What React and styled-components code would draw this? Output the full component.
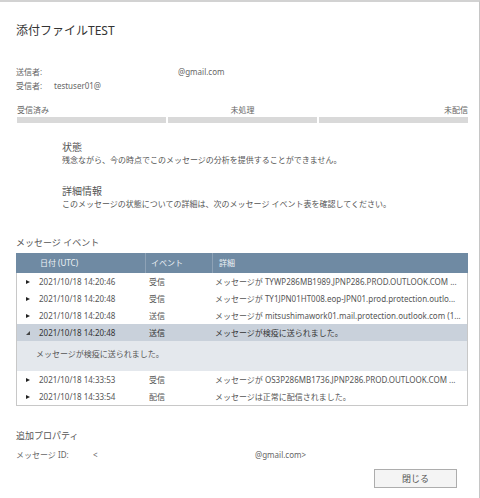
import React from 'react';
import styled, { createGlobalStyle } from 'styled-components';

const GlobalStyle = createGlobalStyle`
  html, body {
    margin: 0;
    padding: 0;
    background: #fff;
  }
  body {
    font-family: "Noto Sans", "Noto Sans CJK JP", sans-serif;
    color: #555;
  }
  * {
    box-sizing: border-box;
  }
`;

// detail column shows the strings as the viewer truncates them
const events = [
  {
    date: '2021/10/18 14:20:46',
    event: '受信',
    detail: 'メッセージが TYWP286MB1989.JPNP286.PROD.OUTLOOK.COM ...',
  },
  {
    date: '2021/10/18 14:20:48',
    event: '受信',
    detail: 'メッセージが TY1JPN01HT008.eop-JPN01.prod.protection.outlo...',
  },
  {
    date: '2021/10/18 14:20:48',
    event: '送信',
    detail: 'メッセージが mitsushimawork01.mail.protection.outlook.com (1...',
  },
  {
    date: '2021/10/18 14:20:48',
    event: '送信',
    detail: 'メッセージが検疫に送られました。',
    expanded: 'メッセージが検疫に送られました。',
  },
  {
    date: '2021/10/18 14:33:53',
    event: '受信',
    detail: 'メッセージが OS3P286MB1736.JPNP286.PROD.OUTLOOK.COM ...',
  },
  {
    date: '2021/10/18 14:33:54',
    event: '配信',
    detail: 'メッセージは正常に配信されました。',
  },
];

const App = () => (
  <>
    <GlobalStyle />
    <Page>
      <Title>添付ファイルTEST</Title>

      <People>
        <Label>送信者:</Label>
        <Value $indent={124}>@gmail.com</Value>
        <Label>受信者:</Label>
        <Value>testuser01@</Value>
      </People>

      <Progress>
        <Step $align="left">受信済み</Step>
        <Step $align="center">未処理</Step>
        <Step $align="right">未配信</Step>
      </Progress>

      <Status>
        <StatusTitle>状態</StatusTitle>
        <StatusText>残念ながら、今の時点でこのメッセージの分析を提供することができません。</StatusText>
        <StatusTitle $gap>詳細情報</StatusTitle>
        <StatusText>このメッセージの状態についての詳細は、次のメッセージ イベント表を確認してください。</StatusText>
      </Status>

      <SectionTitle>メッセージ イベント</SectionTitle>
      <Table>
        <HeadRow>
          <HeadCell $first>日付 (UTC)</HeadCell>
          <HeadCell>イベント</HeadCell>
          <HeadCell $last>詳細</HeadCell>
        </HeadRow>
        {events.map((item, index) => (
          <React.Fragment key={index}>
            <Row $selected={!!item.expanded}>
              <DateCell>
                <Arrow $open={!!item.expanded} />
                {item.date}
              </DateCell>
              <Cell>{item.event}</Cell>
              <DetailCell>{item.detail}</DetailCell>
            </Row>
            {item.expanded && <Expanded>{item.expanded}</Expanded>}
          </React.Fragment>
        ))}
      </Table>

      <SectionTitle $top>追加プロパティ</SectionTitle>
      <Properties>
        <Label>メッセージ ID:</Label>
        <Value>&lt;</Value>
        <Value>@gmail.com&gt;</Value>
      </Properties>

      <Footer>
        <CloseButton type="button">閉じる</CloseButton>
      </Footer>
    </Page>
  </>
);

export default App;

const Page = styled.div`
  width: 480px;
  height: 498px;
  border-top: 2px solid #d2d2d2;
  border-right: 1px solid #c6c6c6;
  padding: 0 10px 0 16px;
  display: flex;
  flex-direction: column;
  overflow: hidden;
`;

const Title = styled.h1`
  margin: 21px 0 0;
  font-size: 12px;
  line-height: 16px;
  font-weight: 400;
  color: #333;
`;

const People = styled.div`
  margin-top: 26px;
  display: grid;
  grid-template-columns: 38px 1fr;
  font-size: 8px;
  line-height: 14px;
`;

const Label = styled.span`
  color: #666;
  white-space: nowrap;
`;

const Value = styled.span`
  padding-left: ${p => p.$indent || 0}px;
  color: #666;
  white-space: nowrap;
`;

const Progress = styled.div`
  margin-top: 11px;
  width: 452px;
  display: grid;
  grid-template-columns: repeat(3, 1fr);
  gap: 2px;
  padding-left: 1px;
`;

const Step = styled.div`
  font-size: 8px;
  line-height: 12px;
  color: #666;
  text-align: ${p => p.$align};
  padding-bottom: 1px;
  border-bottom: 6px solid #d9d9d9;
`;

const Status = styled.div`
  margin-top: 17px;
  padding-left: 46px;
`;

const StatusTitle = styled.div`
  margin-top: ${p => (p.$gap ? '18px' : '0')};
  font-size: 10px;
  line-height: 14px;
  color: #555;
`;

const StatusText = styled.div`
  font-size: 8px;
  line-height: 12px;
  color: #555;
`;

const SectionTitle = styled.div`
  margin-top: ${p => (p.$top ? '24px' : '27px')};
  font-size: 9px;
  line-height: 12px;
  color: #555;
`;

const Table = styled.div`
  margin-top: 4px;
  width: 452px;
  border: 1px solid #c8c8c8;
  border-top: none;
`;

const HeadRow = styled.div`
  display: grid;
  grid-template-columns: 129px 67px 1fr;
  height: 20px;
  background: #6f8aa3;
  margin: 0 -1px;
`;

const HeadCell = styled.div`
  font-size: 8px;
  line-height: 20px;
  color: #eef2f6;
  padding-left: ${p => (p.$first ? '24px' : p.$last ? '6px' : '5px')};
  border-left: ${p => (p.$first ? 'none' : '1px solid #8ea2b6')};
`;

const Row = styled.div`
  display: grid;
  grid-template-columns: 128px 67px 1fr;
  height: 17px;
  align-items: center;
  font-size: 8px;
  background: ${p => (p.$selected ? '#c9d1db' : '#fff')};
  color: ${p => (p.$selected ? '#333' : '#555')};
`;

const Cell = styled.div`
  padding-left: 4px;
  white-space: nowrap;
`;

const DateCell = styled(Cell)`
  display: flex;
  align-items: center;
  padding-left: 9px;
  gap: 9px;
`;

const DetailCell = styled(Cell)`
  padding-left: 3px;
`;

const Arrow = styled.span`
  width: 0;
  height: 0;
  ${p => (p.$open
    ? `
    border-left: 4px solid transparent;
    border-bottom: 4px solid #444;
    margin-top: 1px;
  `
    : `
    border-top: 2.5px solid transparent;
    border-bottom: 2.5px solid transparent;
    border-left: 4px solid #222;
  `)}
`;

const Expanded = styled.div`
  height: 30px;
  background: #e4e8ed;
  padding-left: 19px;
  font-size: 8px;
  line-height: 26px;
  color: #555;
`;

const Properties = styled.div`
  margin-top: 7px;
  display: grid;
  grid-template-columns: 77px 162px 1fr;
  font-size: 8px;
  line-height: 12px;
`;

const Footer = styled.div`
  margin-top: 8px;
  display: flex;
  justify-content: flex-end;
  padding-right: 12px;
`;

const CloseButton = styled.button`
  width: 83px;
  height: 19px;
  border: 1px solid #adadad;
  background: #f4f4f4;
  font-family: inherit;
  font-size: 9px;
  color: #555;
  padding: 0;
`;
